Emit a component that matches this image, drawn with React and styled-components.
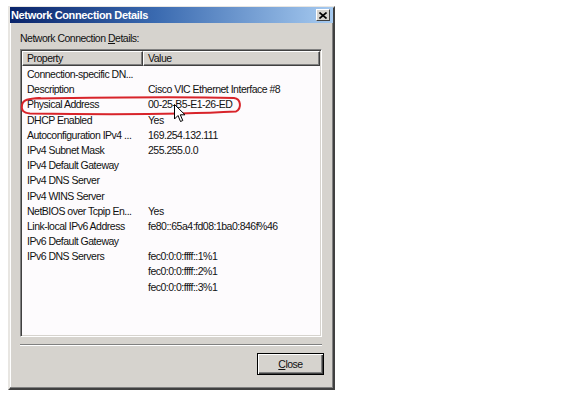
import React from 'react'
import styled, { createGlobalStyle } from 'styled-components'

const GlobalStyle = createGlobalStyle`
    html, body {
        margin: 0;
        padding: 0;
        background: #ffffff;
    }
    body {
        font-family: "Liberation Sans", Arial, sans-serif;
        font-size: 10.5px;
        letter-spacing: -0.5px;
        color: #111;
    }
`

const Page = styled.div`
    padding: 6px 0 0 8px;
`

const Window = styled.div`
    position: relative;
    box-sizing: border-box;
    width: 327px;
    height: 384px;
    background: #d6d3ce;
    border: 2px solid;
    border-color: #e8e6e2 #404040 #404040 #e8e6e2;
    box-shadow: inset -1px -1px 0 #808080, inset 1px 1px 0 #ffffff;
    display: flex;
    flex-direction: column;
`

const TitleBar = styled.div`
    height: 16px;
    margin-top: -1px;
    background: linear-gradient(90deg, #0a246a 0%, #3a6ab0 45%, #a6caf0 100%);
    display: flex;
    align-items: center;
    justify-content: space-between;
    padding: 0 3px 0 1px;
`

const Title = styled.span`
    color: #fff;
    font-weight: bold;
    font-size: 11px;
    letter-spacing: -0.35px;
`

const CloseBox = styled.div`
    width: 14px;
    height: 12px;
    box-sizing: border-box;
    background: #d6d3ce;
    border: 1px solid;
    border-color: #fff #404040 #404040 #fff;
    display: flex;
    align-items: center;
    justify-content: center;
`

const Body = styled.div`
    flex: 1;
    display: flex;
    flex-direction: column;
    padding: 8px 11px 12px 10px;
`

const Label = styled.div`
    line-height: 14px;
    height: 14px;
    margin-bottom: 4px;
    & u { text-decoration: underline; }
`

const ListView = styled.div`
    height: 288px;
    box-sizing: border-box;
    background: #fdfbfd;
    border: 1px solid;
    border-color: #808080 #ffffff #ffffff #808080;
    box-shadow: inset 1px 1px 0 #404040, inset -1px -1px 0 #d6d3ce;
    padding: 1px;
    display: flex;
    flex-direction: column;
`

const HeaderRow = styled.div`
    display: flex;
    height: 15px;
`

const HeaderCell = styled.div`
    box-sizing: border-box;
    width: ${p => p.w ? `${p.w}px` : 'auto'};
    flex: ${p => p.w ? 'none' : 1};
    background: #d6d3ce;
    border: 1px solid;
    border-color: #ffffff #404040 #404040 #ffffff;
    box-shadow: inset -1px -1px 0 #808080;
    padding-left: 4px;
    line-height: 13px;
`

const Rows = styled.div`
    padding-top: 1px;
`

const Row = styled.div`
    display: flex;
    height: 15.2px;
    line-height: 15.2px;
    white-space: nowrap;
`

const Cell = styled.div`
    width: ${p => p.w ? `${p.w}px` : 'auto'};
    flex: ${p => p.w ? 'none' : 1};
    padding-left: 5px;
    box-sizing: border-box;
    overflow: hidden;
`

const Separator = styled.div`
    margin-top: 7px;
    height: 0;
    border-top: 1px solid #808080;
    border-bottom: 1px solid #ffffff;
`

const Footer = styled.div`
    display: flex;
    justify-content: flex-end;
    margin: 7px -2px 0 0;
`

const Button = styled.button`
    width: 67px;
    height: 22px;
    box-sizing: border-box;
    background: #d6d3ce;
    font: inherit;
    letter-spacing: inherit;
    border: 1px solid #000;
    box-shadow: inset 1px 1px 0 #ffffff, inset -1px -1px 0 #404040, inset -2px -2px 0 #808080;
    padding: 0;
    color: #111;
    & u { text-decoration: underline; }
`

const Annotation = styled.svg`
    position: absolute;
    left: 10px;
    top: 88px;
    overflow: visible;
`

const Cursor = styled.svg`
    position: absolute;
    left: 164px;
    top: 96px;
`

const rows = [
    ['Connection-specific DN...', ''],
    ['Description', 'Cisco VIC Ethernet Interface #8'],
    ['Physical Address', '00-25-B5-E1-26-ED'],
    ['DHCP Enabled', 'Yes'],
    ['Autoconfiguration IPv4 ...', '169.254.132.111'],
    ['IPv4 Subnet Mask', '255.255.0.0'],
    ['IPv4 Default Gateway', ''],
    ['IPv4 DNS Server', ''],
    ['IPv4 WINS Server', ''],
    ['NetBIOS over Tcpip En...', 'Yes'],
    ['Link-local IPv6 Address', 'fe80::65a4:fd08:1ba0:846f%46'],
    ['IPv6 Default Gateway', ''],
    ['IPv6 DNS Servers', 'fec0:0:0:ffff::1%1'],
    ['', 'fec0:0:0:ffff::2%1'],
    ['', 'fec0:0:0:ffff::3%1'],
]

export default function App() {
    return (
        <Page>
            <GlobalStyle />
            <Window>
                <TitleBar>
                    <Title>Network Connection Details</Title>
                    <CloseBox>
                        <svg width="8" height="7" viewBox="0 0 8 7">
                            <path d="M0.5 0.5 L7.5 6.5 M7.5 0.5 L0.5 6.5" stroke="#000" strokeWidth="1.6" />
                        </svg>
                    </CloseBox>
                </TitleBar>
                <Body>
                    <Label>Network Connection <u>D</u>etails:</Label>
                    <ListView>
                        <HeaderRow>
                            <HeaderCell w={121}>Property</HeaderCell>
                            <HeaderCell>Value</HeaderCell>
                        </HeaderRow>
                        <Rows>
                            {rows.map(([k, v], i) => (
                                <Row key={i}>
                                    <Cell w={121}>{k}</Cell>
                                    <Cell>{v}</Cell>
                                </Row>
                            ))}
                        </Rows>
                    </ListView>
                    <Separator />
                    <Footer>
                        <Button><u>C</u>lose</Button>
                    </Footer>
                </Body>
                <Annotation width="222" height="20" viewBox="0 0 222 20">
                    <path
                        d="M14 2.5 C80 1.5 160 0.5 214 2 C221 3 222 12 216 15.5 C170 18 80 18.5 10 17.5 C3 17 1 14 2 9 C3 4 8 2.5 20 2"
                        fill="none" stroke="#d8242a" strokeWidth="2" strokeLinecap="round" />
                </Annotation>
                <Cursor width="12" height="20" viewBox="0 0 12 20">
                    <path d="M0.5 0.5 L0.5 15 L4 11.5 L6.5 17.5 L8.8 16.5 L6.3 10.8 L11 10.8 Z"
                        fill="#fff" stroke="#000" strokeWidth="1" strokeLinejoin="round" />
                </Cursor>
            </Window>
        </Page>
    )
}
